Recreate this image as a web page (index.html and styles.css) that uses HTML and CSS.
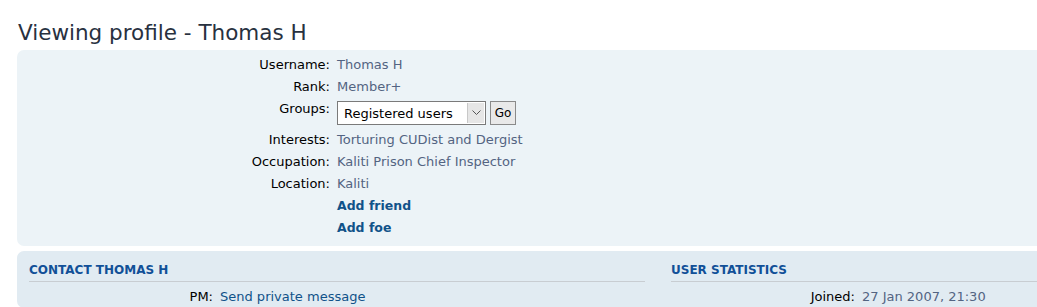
FILE: index.html
```html
<!DOCTYPE html>
<html lang="en">
<head>
    <meta charset="UTF-8">
    <title>Viewing profile - Thomas H</title>
    <link rel="stylesheet" href="styles.css">
</head>
<body>
    <div id="pageBody">
        <h2 id="pageTitle">Viewing profile - Thomas H</h2>

        <div class="panel bg1">
            <div class="row"><span class="lbl">Username:</span><span class="val">Thomas H</span></div>
            <div class="row"><span class="lbl">Rank:</span><span class="val">Member+</span></div>
            <div class="row groupsRow">
                <span class="lbl">Groups:</span>
                <span class="val">
                    <span class="selectBx">
                        <span class="selectTxt">Registered users</span>
                        <span class="selectArrow">
                            <svg width="9" height="6" viewBox="0 0 9 6"><path d="M0.5 0.5 L4.5 4.5 L8.5 0.5" fill="none" stroke="#555" stroke-width="1"/></svg>
                        </span>
                    </span>
                    <button class="goBtn">Go</button>
                </span>
            </div>
            <div class="row"><span class="lbl">Interests:</span><span class="val">Torturing CUDist and Dergist</span></div>
            <div class="row"><span class="lbl">Occupation:</span><span class="val">Kaliti Prison Chief Inspector</span></div>
            <div class="row"><span class="lbl">Location:</span><span class="val">Kaliti</span></div>
            <div class="row"><span class="lbl"></span><a class="val strongLink" href="#">Add friend</a></div>
            <div class="row"><span class="lbl"></span><a class="val strongLink" href="#">Add foe</a></div>
        </div>

        <div class="panel bg2 cols">
            <div class="col">
                <h3 class="colHead">Contact Thomas H</h3>
                <div class="row small"><span class="lbl">PM:</span><a class="val link" href="#">Send private message</a></div>
            </div>
            <div class="col">
                <h3 class="colHead">User statistics</h3>
                <div class="row small"><span class="lbl">Joined:</span><span class="val">27 Jan 2007, 21:30</span></div>
            </div>
        </div>
    </div>
</body>
</html>
```

FILE: styles.css
```css
*{
    box-sizing: border-box;
}

body{
    margin: 0;
    overflow: hidden;
    font-family: "DejaVu Sans", Verdana, sans-serif;
    font-size: 13px;
    color: #000;
    background-color: #fff;
}

#pageBody{
    width: 1060px;
    padding: 0 0 0 17px;
}

#pageTitle{
    font-weight: normal;
    font-size: 21.5px;
    color: #28313f;
    margin: 0;
    padding: 19px 0 0 1px;
    line-height: 28px;
    height: 50px;
}

.panel{
    border-radius: 7px 0 0 7px;
    margin-bottom: 5px;
}

.bg1{
    background-color: #ecf3f7;
    padding: 4px 0 7px 0;
}

.bg2{
    background-color: #e1ebf2;
    padding: 8px 12px 0 12px;
}

.row{
    display: flex;
    line-height: 22px;
}

.lbl{
    width: 313px;
    text-align: right;
    flex-shrink: 0;
}

.val{
    margin-left: 7px;
    color: #536482;
}

.groupsRow{
    height: 31px;
}

.groupsRow .val{
    display: flex;
    padding-top: 3px;
}

.selectBx{
    display: flex;
    width: 149px;
    height: 24px;
    border: 1px solid #7a7a7a;
    background-color: #fff;
    color: #000;
    font-size: 13px;
}

.selectTxt{
    flex: 1;
    padding-left: 6px;
    line-height: 24px;
}

.selectArrow{
    width: 17px;
    margin: 1px;
    background-color: #e6e6e6;
    border-left: 1px solid #c8c8c8;
    display: flex;
    align-items: center;
    justify-content: center;
}

.goBtn{
    margin-left: 4px;
    height: 24px;
    width: 26px;
    padding: 0;
    font-family: inherit;
    font-size: 12px;
    color: #000;
    background-color: #e9e9e9;
    border: 1px solid #8a8a8a;
    border-radius: 0;
}

.strongLink{
    color: #105289;
    font-weight: bold;
    font-size: 12.5px;
    text-decoration: none;
}

.link{
    color: #105289;
    text-decoration: none;
}

.cols{
    display: flex;
    gap: 26px;
}

.col{
    width: 616px;
    flex-shrink: 0;
}

.colHead{
    margin: 0;
    font-size: 12px;
    font-weight: bold;
    text-transform: uppercase;
    color: #115098;
    line-height: 22px;
    border-bottom: 1px solid #c8cdd2;
}

.row.small .lbl{
    width: 184px;
}

.row.small{
    padding-top: 4px;
}
```
